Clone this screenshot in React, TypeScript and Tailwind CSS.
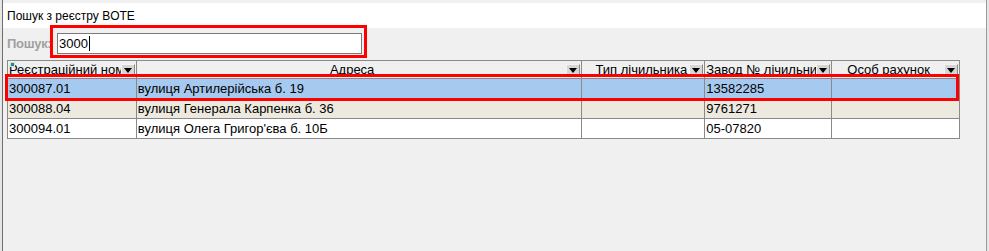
import React from 'react';

const columns = [
  { title: 'Реєстраційний ном', width: 'w-[129px]', text: 'text-left' },
  { title: 'Адреса', width: 'w-[446px]', text: 'text-center' },
  { title: 'Тип лічильника', width: 'w-[123px]', text: 'text-right pr-[2px]' },
  { title: 'Завод № лічильни', width: 'w-[127px]', text: 'text-left' },
  { title: 'Особ рахунок', width: 'w-[128px]', text: 'text-center' },
];

const rows = [
  { cells: ['300087.01', 'вулиця Артилерійська б. 19', '', '13582285', ''], bg: 'bg-[#a6c9ef]' },
  { cells: ['300088.04', 'вулиця Генерала Карпенка б. 36', '', '9761271', ''], bg: 'bg-[#ede9df]' },
  { cells: ['300094.01', "вулиця Олега Григор'єва б. 10Б", '', '05-07820', ''], bg: 'bg-white' },
];

const DropButton = () => (
  <div className="w-[14px] h-[13px] shrink-0 bg-[#d6d6d6] border-t border-l border-t-[#f4f4f4] border-l-[#f4f4f4] border-b border-r border-b-[#8a8a8a] border-r-[#8a8a8a] flex items-center justify-center">
    <svg width="8" height="5" viewBox="0 0 8 5">
      <path d="M0 0 H8 L4 5 Z" fill="#000" />
    </svg>
  </div>
);

const App = () => {
  return (
    <div className="w-[989px] h-[251px] bg-[#f0f0f0] flex overflow-hidden font-['Liberation_Sans',Arial,sans-serif] text-black">
      {/* left edge of the window behind */}
      <div className="w-[3px] h-full bg-[#e6e6e6] border-r border-[#6e6e6e]" />

      {/* dialog */}
      <div className="w-[984px] h-full flex flex-col pt-[3px] border-r border-[#9a9a9a]">
        <div className="h-[25px] bg-white flex items-center pl-[4px] text-[12px] leading-none">
          Пошук з реєстру BOTE
        </div>

        <div className="relative flex-1 pl-[4px]">
          {/* search row */}
          <div className="flex items-center h-[22px] mt-[4px]">
            <span className="w-[50px] text-[13px] font-bold text-[#a0a0a0] leading-none tracking-[-0.3px]">Пошук:</span>
            <div className="w-[305px] h-[21px] bg-white border border-[#7a7a7a] flex items-center pl-[1px] text-[13px] leading-none">
              3000
              <span className="w-px h-[15px] bg-black ml-px" />
            </div>
          </div>

          {/* grid */}
          <div className="relative mt-[6px] w-[953px] border-l border-t border-[#8a8a8a]">
            <div className="absolute left-[2px] top-[1px] w-[5px] h-[5px] bg-[#1e8a8a] border border-[#c8e0e0] z-10" />
            <div className="flex h-[18px]">
              {columns.map((col, i) => (
                <div
                  key={i}
                  className={`${col.width} h-full bg-[#f0f0f0] border-r border-b border-[#8a8a8a] flex items-end overflow-hidden pl-[1px] pr-[1px] pb-[1px]`}
                >
                  <span className={`block flex-1 min-w-0 text-[13px] leading-[15px] whitespace-nowrap overflow-hidden ${col.text}`}>
                    {col.title}
                  </span>
                  <DropButton />
                </div>
              ))}
            </div>
            {rows.map((row, r) => (
              <div key={r} className={`flex h-[20px] ${row.bg}`}>
                {row.cells.map((cell, c) => (
                  <div
                    key={c}
                    className={`${columns[c].width} h-full border-r border-b border-[#8a8a8a] flex items-center pl-[1px] text-[13px] leading-none whitespace-nowrap overflow-hidden`}
                  >
                    {cell}
                  </div>
                ))}
              </div>
            ))}
          </div>

          {/* red highlight marks */}
          <div className="absolute left-[47px] top-[-3px] w-[317px] h-[33px] border-[3px] border-[#ff0000]" />
          <div className="absolute left-[2px] top-[46px] w-[954px] h-[27px] border-[3px] border-[#ff0000]" />
        </div>
      </div>

      {/* right edge of the window behind */}
      <div className="w-[2px] h-full bg-[#e6e6e6]" />
    </div>
  );
};

export default App;
